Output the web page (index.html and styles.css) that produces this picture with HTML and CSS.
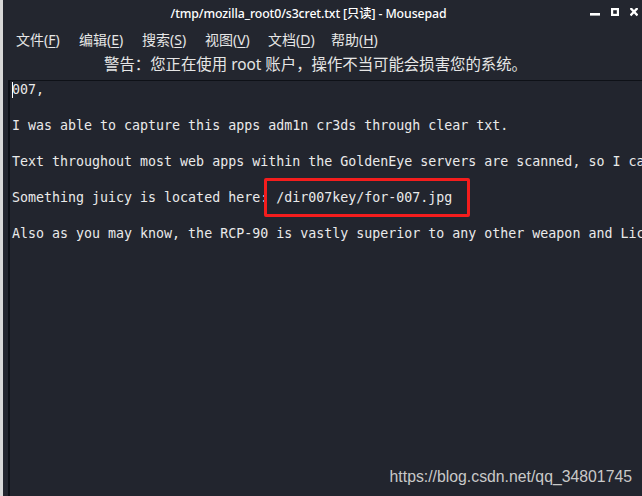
FILE: index.html
```html
<!DOCTYPE html>
<html>
<head>
<meta charset="utf-8">
<link rel="stylesheet" href="styles.css">
</head>
<body>
<div class="window">
  <div class="titlebar">
    <div class="title">/tmp/mozilla_root0/s3cret.txt [只读] - Mousepad</div>
    <div class="controls">
      <svg class="ctl" width="10" height="9" viewBox="0 0 10 9"><rect x="0" y="5" width="10" height="2.6" fill="#fff"/></svg>
      <svg class="ctl" width="8" height="9" viewBox="0 0 8 9"><rect x="1.1" y="1.1" width="5.8" height="5.8" fill="none" stroke="#fff" stroke-width="2.2"/></svg>
      <svg class="ctl" width="8" height="9" viewBox="0 0 8 9"><path d="M0.5 0 L7.5 7.5 M7.5 0 L0.5 7.5" stroke="#fff" stroke-width="2.3"/></svg>
    </div>
  </div>
  <div class="menubar">
    <span class="mi">文件(<u>F</u>)</span>
    <span class="mi">编辑(<u>E</u>)</span>
    <span class="mi">搜索(<u>S</u>)</span>
    <span class="mi">视图(<u>V</u>)</span>
    <span class="mi">文档(<u>D</u>)</span>
    <span class="mi">帮助(<u>H</u>)</span>
  </div>
  <div class="warning">警告：您正在使用 root 账户，操作不当可能会损害您的系统。</div>
  <div class="editor">
    <div class="line"><span class="cursor"></span>007,</div>
    <div class="line"> </div>
    <div class="line">I was able to capture this apps adm1n cr3ds through clear txt.</div>
    <div class="line"> </div>
    <div class="line">Text throughout most web apps within the GoldenEye servers are scanned, so I cannot add the cr3dentials here.</div>
    <div class="line"> </div>
    <div class="line">Something juicy is located here: <span class="mark">/dir007key/for-007.jpg</span></div>
    <div class="line"> </div>
    <div class="line">Also as you may know, the RCP-90 is vastly superior to any other weapon and License to Kill is the only way to play.</div>
    <div class="watermark">https://blog.csdn.net/qq_34801745</div>
  </div>
</div>
</body>
</html>
```
FILE: styles.css
```css
html, body {
  margin: 0;
  padding: 0;
  background: #23262f;
  width: 642px;
  height: 496px;
  overflow: hidden;
}
.window {
  box-sizing: border-box;
  height: 496px;
  border-left: 3px solid #d8d8d8;
  display: flex;
  flex-direction: column;
  background: #23262f;
  font-family: "Noto Sans", "Noto Sans CJK SC", sans-serif;
  color: #ececec;
}
.titlebar {
  height: 25px;
  display: flex;
  align-items: center;
  position: relative;
}
.title {
  flex: 1;
  text-align: center;
  font-size: 12.3px;
  font-weight: 500;
  color: #ffffff;
  padding-right: 28px;
  letter-spacing: -0.1px;
}
.controls {
  position: absolute;
  right: 4px;
  top: 8px;
  display: flex;
  gap: 11px;
}
.menubar {
  height: 28px;
  display: flex;
  align-items: center;
  padding-left: 13px;
  font-size: 14px;
  color: #e6e6e6;
}
.mi {
  width: 63px;
}
.mi u {
  text-decoration-thickness: 1px;
  text-underline-offset: 2px;
}
.warning {
  height: 27px;
  line-height: 24px;
  text-align: center;
  font-size: 15.4px;
  color: #e6e6e6;
  padding-right: 14px;
}
.editor {
  flex: 1;
  margin-left: 5px;
  border-top: 1px solid #0e1117;
  border-left: 2px solid #0e1117;
  background: #22252e;
  padding: 0 0 0 2px;
  overflow: hidden;
  position: relative;
  font-family: "DejaVu Sans Mono", monospace;
  font-size: 13.3px;
  color: #eaeaea;
}
.line {
  height: 18px;
  line-height: 18px;
  white-space: pre;
  position: relative;
}
.cursor {
  position: absolute;
  left: 0;
  top: 1px;
  width: 1px;
  height: 16px;
  background: #ffffff;
}
.mark {
  position: relative;
}
.mark::before {
  content: "";
  position: absolute;
  left: -12px;
  top: -12px;
  width: 200px;
  height: 33px;
  border: 3px solid #f41d1d;
  border-radius: 2px;
}
.watermark {
  position: absolute;
  right: 10px;
  bottom: 10px;
  font-family: "Liberation Sans", Arial, sans-serif;
  font-size: 15.8px;
  color: #c9c9c9;
}
```
